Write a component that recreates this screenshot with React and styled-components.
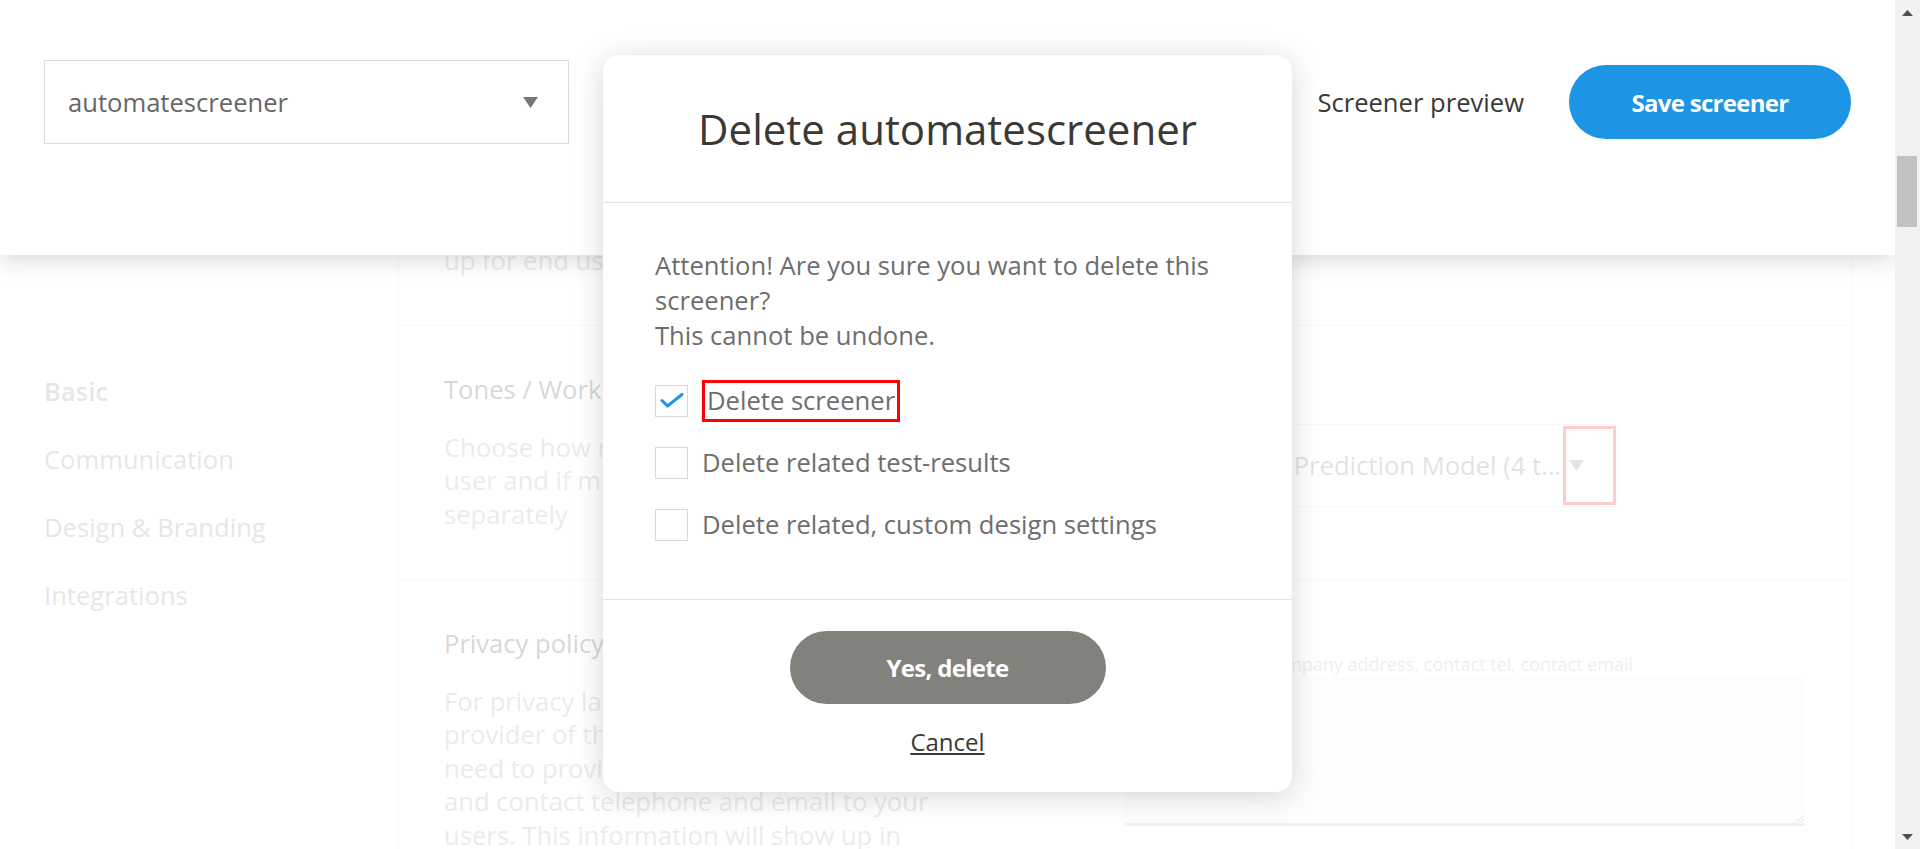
import React from 'react';
import styled, { createGlobalStyle } from 'styled-components';

const GlobalStyle = createGlobalStyle`
  html, body {
    margin: 0;
    padding: 0;
    overflow: hidden;
  }
  body {
    font-family: "Open Sans", "Noto Sans", sans-serif;
    font-size: 25.6px;
    color: #3a3934;
  }
`;

const Window = styled.div`
  display: flex;
  width: 100vw;
  height: 100vh;
`;

const Viewport = styled.div`
  position: relative;
  flex: 1;
  overflow: hidden;
`;

const Header = styled.header`
  position: absolute;
  top: 0;
  left: 0;
  right: 0;
  z-index: 10;
  height: 255px;
  box-sizing: border-box;
  padding: 60px 44px 0;
  background: #fff;
  box-shadow: 0 6px 22px rgba(0, 0, 0, 0.14);
`;

const HeaderRow = styled.div`
  display: flex;
  align-items: center;
  height: 84px;
`;

const ScreenerSelect = styled.div`
  display: flex;
  align-items: center;
  justify-content: space-between;
  width: 525px;
  height: 84px;
  box-sizing: border-box;
  padding: 0 30px 0 23px;
  border: 1px solid #dcdcdc;
  color: #676767;
`;

const PreviewLink = styled.span`
  margin-left: auto;
  margin-right: 45px;
  color: #3a3934;
`;

const PillButton = styled.button`
  width: ${(p) => p.$width}px;
  height: ${(p) => p.$height}px;
  border: none;
  border-radius: 40px;
  background: ${(p) => p.$bg};
  color: #fff;
  font-family: inherit;
  font-size: 24px;
  font-weight: 700;
  letter-spacing: -0.7px;
  cursor: pointer;
`;

const Main = styled.main`
  display: flex;
  padding-top: 72px;
`;

const Nav = styled.nav`
  display: flex;
  flex-direction: column;
  gap: 34.5px;
  width: 398px;
  box-sizing: border-box;
  padding: 303px 0 0 44px;
`;

const NavItem = styled.div`
  line-height: 33.5px;
  color: #808080;
  font-weight: ${(p) => (p.$active ? 600 : 400)};
`;

const Panel = styled.section`
  width: 1454px;
  box-sizing: border-box;
  border-left: 1px solid #dedede;
  border-right: 1px solid #dedede;
`;

const Row = styled.div`
  display: grid;
  grid-template-columns: 1fr 681px;
  column-gap: 120px;
  padding: 47px 46px 48px 45px;
  border-bottom: 1px solid #e2e2e2;
`;

const FieldTitle = styled.div`
  line-height: 33.5px;
  color: #3a3934;
  margin-bottom: 24px;
`;

const FieldDesc = styled.div`
  line-height: 33.5px;
  color: #9a9a9a;
  white-space: pre-line;
`;

const FieldColumn = styled.div`
  display: flex;
  flex-direction: column;
  margin-top: ${(p) => p.$offset || 0}px;
`;

const FieldLabel = styled.div`
  line-height: 33.5px;
  margin-bottom: 17.5px;
  color: #3a3934;
`;

const ModelSelect = styled.div`
  display: flex;
  align-items: center;
  width: 494px;
  height: 83px;
  box-sizing: border-box;
  border: 1px solid #dcdcdc;
  color: #707070;
`;

const SelectText = styled.span`
  flex: 1;
  min-width: 0;
  padding-left: 23px;
  white-space: nowrap;
  overflow: hidden;
  text-overflow: ellipsis;
`;

const CaretZone = styled.span`
  display: flex;
  align-items: center;
  width: 53px;
  height: 79px;
  box-sizing: border-box;
  padding-left: 3px;
  margin-right: 1px;
  border: 3px solid ${(p) => (p.$highlight ? '#ff0000' : 'transparent')};
`;

const Hint = styled.div`
  font-size: 18px;
  line-height: 24px;
  color: #a8a8a8;
  margin-bottom: 1px;
`;

const TextArea = styled.textarea`
  width: 681px;
  height: 149px;
  box-sizing: border-box;
  border: none;
  border-bottom: 3px solid #bdbdbd;
  background: #f5f5f5;
  font-family: inherit;
  font-size: 18px;
`;

// white veil that greys out the page while the dialog is open
const Overlay = styled.div`
  position: absolute;
  inset: 0;
  z-index: 5;
  background: rgba(255, 255, 255, 0.8);
`;

const ModalLayer = styled.div`
  position: absolute;
  inset: 0;
  z-index: 20;
  display: flex;
  justify-content: center;
  align-items: flex-start;
  padding-top: 55px;
`;

const Modal = styled.div`
  width: 689px;
  background: #fff;
  border-radius: 16px;
  box-shadow: 0 4px 30px rgba(0, 0, 0, 0.16);
`;

const ModalTitle = styled.h2`
  margin: 0;
  padding: 49px 20px 48px;
  border-bottom: 1px solid #e3e3e3;
  text-align: center;
  font-size: 42px;
  line-height: 50px;
  font-weight: 400;
  color: #3a3934;
`;

const ModalBody = styled.div`
  padding: 45px 52px 52px;
  line-height: 35px;
  color: #6e6e6e;
`;

const Message = styled.p`
  margin: 0;
`;

const Options = styled.div`
  display: flex;
  flex-direction: column;
  gap: 18px;
  margin-top: 26px;
`;

const Option = styled.label`
  display: flex;
  align-items: center;
  height: 44px;
`;

const Box = styled.span`
  display: flex;
  align-items: center;
  justify-content: center;
  flex-shrink: 0;
  width: 33px;
  height: 32px;
  box-sizing: border-box;
  border: 1px solid #d9d9d9;
`;

const OptionText = styled.span`
  margin-left: 14px;
  line-height: 36px;
  padding: ${(p) => (p.$highlight ? '0 2px' : '0')};
  border: ${(p) => (p.$highlight ? '3px solid #ff0000' : 'none')};
`;

const ModalFooter = styled.div`
  display: flex;
  flex-direction: column;
  align-items: center;
  padding: 31px 0 34px;
  border-top: 1px solid #e3e3e3;
`;

const CancelLink = styled.a`
  margin-top: 21px;
  font-size: 24px;
  line-height: 33px;
  color: #3a3934;
  text-decoration: underline;
  text-underline-offset: 2px;
`;

const Scrollbar = styled.div`
  display: flex;
  flex-direction: column;
  width: 25px;
  background: #f1f1f1;
`;

const ScrollArrow = styled.div`
  display: flex;
  align-items: center;
  justify-content: center;
  height: 25px;
`;

const ScrollTrack = styled.div`
  flex: 1;
  padding: 131px 3px 0 2px;
`;

const ScrollThumb = styled.div`
  height: 71px;
  background: #c1c1c1;
`;

const Caret = ({ color = '#777' }) => (
  <svg width="15" height="11" viewBox="0 0 15 11">
    <polygon points="0,0 15,0 7.5,11" fill={color} />
  </svg>
);

const Check = () => (
  <svg width="24" height="16" viewBox="0 0 24 16">
    <path d="M2 7.5 L7.5 13 L22 1.5" fill="none" stroke="#1e95e4" strokeWidth="3" strokeLinecap="round" strokeLinejoin="round" />
  </svg>
);

const ArrowGlyph = ({ up }) => (
  <svg width="11" height="6" viewBox="0 0 11 6">
    <polygon points={up ? '0,6 11,6 5.5,0' : '0,0 11,0 5.5,6'} fill="#505050" />
  </svg>
);

const navItems = ['Basic', 'Communication', 'Design & Branding', 'Integrations'];

const options = [
  { label: 'Delete screener', checked: true },
  { label: 'Delete related test-results', checked: false },
  { label: 'Delete related, custom design settings', checked: false },
];

export default function App() {
  return (
    <>
      <GlobalStyle />
      <Window>
        <Viewport>
          <Header>
            <HeaderRow>
              <ScreenerSelect>
                automatescreener
                <Caret />
              </ScreenerSelect>
              <PreviewLink>Screener preview</PreviewLink>
              <PillButton $width={282} $height={74} $bg="#1e95e4">Save screener</PillButton>
            </HeaderRow>
          </Header>

          <Main>
            <Nav>
              {navItems.map((item, i) => (
                <NavItem key={item} $active={i === 0}>{item}</NavItem>
              ))}
            </Nav>
            <Panel>
              <Row>
                <div>
                  <FieldTitle>Screener name</FieldTitle>
                  <FieldDesc>{'Give your screener a name. It is\nused internally and does not show\nup for end users.'}</FieldDesc>
                </div>
                <div />
              </Row>
              <Row>
                <div>
                  <FieldTitle>Tones / Workplace model</FieldTitle>
                  <FieldDesc>{'Choose how many tones to show the\nuser and if models are evaluated\nseparately'}</FieldDesc>
                </div>
                <FieldColumn>
                  <FieldLabel>Tone model</FieldLabel>
                  <ModelSelect>
                    <SelectText>Standard AI Prediction Model (4 tones)</SelectText>
                    <CaretZone $highlight>
                      <Caret color="#7a7a7a" />
                    </CaretZone>
                  </ModelSelect>
                </FieldColumn>
              </Row>
              <Row>
                <div>
                  <FieldTitle>Privacy policy</FieldTitle>
                  <FieldDesc>{'For privacy laws, you as the\nprovider of the screener\nneed to provide company name, address\nand contact telephone and email to your\nusers. This information will show up in\nthe footer of the screener.'}</FieldDesc>
                </div>
                <FieldColumn $offset={25}>
                  <Hint>Company name, company address, contact tel, contact email</Hint>
                  <TextArea defaultValue="" />
                </FieldColumn>
              </Row>
            </Panel>
          </Main>

          <Overlay />

          <ModalLayer>
            <Modal>
              <ModalTitle>Delete automatescreener</ModalTitle>
              <ModalBody>
                <Message>
                  Attention! Are you sure you want to delete this screener?
                  <br />
                  This cannot be undone.
                </Message>
                <Options>
                  {options.map((opt, i) => (
                    <Option key={opt.label}>
                      <Box>{opt.checked && <Check />}</Box>
                      <OptionText $highlight={i === 0}>{opt.label}</OptionText>
                    </Option>
                  ))}
                </Options>
              </ModalBody>
              <ModalFooter>
                <PillButton $width={316} $height={73} $bg="#82827c">Yes, delete</PillButton>
                <CancelLink>Cancel</CancelLink>
              </ModalFooter>
            </Modal>
          </ModalLayer>
        </Viewport>

        <Scrollbar>
          <ScrollArrow><ArrowGlyph up /></ScrollArrow>
          <ScrollTrack>
            <ScrollThumb />
          </ScrollTrack>
          <ScrollArrow><ArrowGlyph /></ScrollArrow>
        </Scrollbar>
      </Window>
    </>
  );
}
